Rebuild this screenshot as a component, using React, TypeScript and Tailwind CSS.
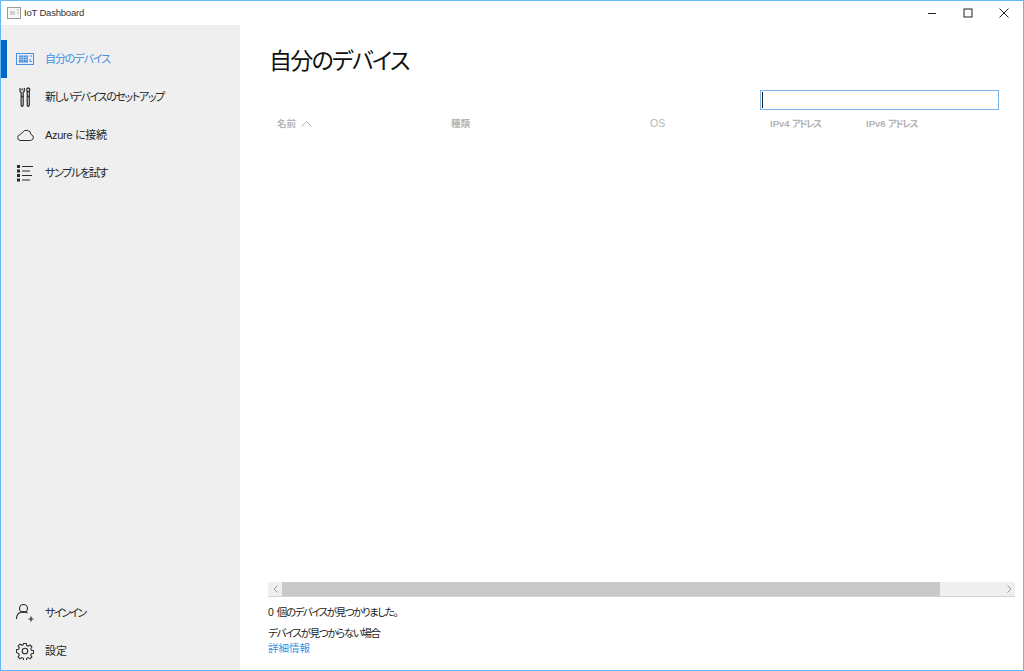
import React from "react";

function DeviceIcon() {
  return (
    <svg width="18" height="13" viewBox="0 0 18 13" fill="none" stroke="#4a90dc" strokeWidth="1">
      <rect x="0.5" y="0.5" width="17" height="11" fill="#e6eef7" />
      <rect x="3" y="2.5" width="9" height="7" fill="#3f86d6" stroke="none" />
      <path d="M3 4.5h9M3 6.5h9M5 2.5v7M7.5 2.5v7M10 2.5v7" stroke="#cfe0f2" strokeWidth="0.6" />
      <path d="M14 3h2M14 6v2.5h2" />
    </svg>
  );
}
function ToolsIcon() {
  return (
    <svg width="12" height="20" viewBox="0 0 14 20" preserveAspectRatio="none" fill="none" stroke="#2b2b2b" strokeWidth="1.4">
      <path d="M1.2 1v2.6a2 2 0 0 0 1.3 1.8V18a1.2 1.2 0 0 0 2.4 0V5.4a2 2 0 0 0 1.3-1.8V1" />
      <path d="M3.7 1.5v2" />
      <circle cx="10.8" cy="2.8" r="1.8" />
      <path d="M9.6 4.5V18a1.2 1.2 0 0 0 2.4 0V4.5" />
      <path d="M2.5 9.5h2.4M9.6 9.5H12" />
    </svg>
  );
}
function CloudIcon() {
  return (
    <svg width="18" height="12" viewBox="0 0 18 12" fill="none" stroke="#2b2b2b" strokeWidth="1">
      <path d="M4 11.5h10.5a3 3 0 0 0 .6-5.9A4.6 4.6 0 0 0 6.5 3.6 3 3 0 0 0 4.3 5.6 3 3 0 0 0 4 11.5z" />
    </svg>
  );
}
function ListIcon() {
  return (
    <svg width="16" height="17" viewBox="0 0 16 17" fill="none">
      <g fill="#2b2b2b">
        <rect x="0" y="0" width="3" height="3" />
        <rect x="0" y="4.5" width="3" height="3" />
        <rect x="0" y="9" width="3" height="3" />
        <rect x="0" y="13.5" width="3" height="3" />
      </g>
      <path d="M5 1.5h11M5 6h8M5 10.5h10M5 15h8" stroke="#2b2b2b" strokeWidth="1" />
    </svg>
  );
}
function UserPlusIcon() {
  return (
    <svg width="18" height="18" viewBox="0 0 18 18" fill="none" stroke="#2b2b2b" strokeWidth="1.1">
      <circle cx="7.5" cy="4.5" r="4" />
      <path d="M0.5 15a7 7 0 0 1 11-6" />
      <path d="M12.5 15h5M15 12.5v5" strokeWidth="1.2" />
    </svg>
  );
}
function GearIcon() {
  return (
    <svg width="18" height="18" viewBox="0 0 18 18" fill="none" stroke="#2b2b2b" strokeWidth="1.1">
      <circle cx="9" cy="9" r="2.8" />
      <path d="M7.6 1h2.8l.4 2.3 1.5.7 2-1.3 2 2-1.3 2 .7 1.5 2.3.4v2.8l-2.3.4-.7 1.5 1.3 2-2 2-2-1.3-1.5.7-.4 2.3H7.6l-.4-2.3-1.5-.7-2 1.3-2-2 1.3-2-.7-1.5L0 10.4V7.6l2.3-.4.7-1.5-1.3-2 2-2 2 1.3 1.5-.7z" transform="translate(0.45 0.45) scale(0.95)" />
    </svg>
  );
}
function AppIcon() {
  return (
    <svg width="14" height="12" viewBox="0 0 14 12" fill="#f7f7f7" stroke="#9a9a9a" strokeWidth="1">
      <rect x="0.5" y="0.5" width="13" height="11" />
      <path d="M3 4h5v4H3z" fill="#d0d0d0" stroke="none" />
      <path d="M10 3h2M10 6h2" stroke="#b0b0b0" />
    </svg>
  );
}

function NavItem({ icon, label, active, track }: { icon: React.ReactNode; label: string; active?: boolean; track?: string }) {
  return (
    <div className="relative flex h-[38px] items-center">
      {active && <div className="absolute left-0 top-0 h-[38px] w-[6px] bg-[#0067c8]" />}
      <div className="flex w-[44px] shrink-0 justify-center pl-[4px]">{icon}</div>
      <span className={`pt-[1px] text-[11px] ${track ?? ""} ${active ? "text-[#3f8fdf]" : "text-[#262626]"}`}>{label}</span>
    </div>
  );
}

function Th({ w, children }: { w: string; children: React.ReactNode }) {
  return <div className={`${w} shrink-0 text-[9.5px] font-bold text-[#b4b4b4]`}>{children}</div>;
}

export default function App() {
  return (
    <div
      className="flex h-[671px] w-[1024px] flex-col overflow-hidden border border-[#62b8f2] bg-white [font-feature-settings:'palt']"
      style={{ fontFamily: '"Liberation Sans","Noto Sans CJK JP",sans-serif' }}
    >
      <div className="flex h-[24px] shrink-0 items-center">
        <div className="ml-[6px] flex items-center gap-[3px]">
          <AppIcon />
          <span className="text-[9.5px] tracking-[-0.2px] text-[#333]">IoT Dashboard</span>
        </div>
        <div className="ml-auto flex items-center pr-[1px]">
          <div className="flex w-[36px] justify-center">
            <svg width="10" height="10" viewBox="0 0 10 10" stroke="#222" strokeWidth="1"><path d="M1 5.5h8" /></svg>
          </div>
          <div className="flex w-[36px] justify-center">
            <svg width="10" height="10" viewBox="0 0 10 10" fill="none" stroke="#222" strokeWidth="1"><rect x="1" y="1" width="8" height="8" /></svg>
          </div>
          <div className="flex w-[36px] justify-center">
            <svg width="10" height="10" viewBox="0 0 10 10" stroke="#222" strokeWidth="1"><path d="M0.5 0.5l9 9M9.5 0.5l-9 9" /></svg>
          </div>
        </div>
      </div>
      <div className="flex min-h-0 flex-1">
        <aside className="flex w-[239px] shrink-0 flex-col justify-between bg-[#efefef] pt-[15px]">
          <div className="flex flex-col">
            <NavItem active icon={<DeviceIcon />} label="自分のデバイス" track="tracking-[-1.1px]" />
            <NavItem icon={<ToolsIcon />} label="新しいデバイスのセットアップ" track="tracking-[-1.35px]" />
            <NavItem icon={<CloudIcon />} label="Azure に接続" track="tracking-[-0.3px]" />
            <NavItem icon={<ListIcon />} label="サンプルを試す" track="tracking-[-1.3px]" />
          </div>
          <div className="flex flex-col">
            <NavItem icon={<UserPlusIcon />} label="サインイン" track="tracking-[-1.8px]" />
            <NavItem icon={<GearIcon />} label="設定" />
          </div>
        </aside>
        <main className="flex min-w-0 flex-1 flex-col pl-[28px] pr-[8px]">
          <h1 className="mt-[18px] h-[35px] pl-[1px] text-[23px] font-normal leading-[36px] tracking-[-1.7px] text-[#111]">自分のデバイス</h1>
          <div className="mt-[12px] flex justify-end pr-[16px]">
            <div className="flex h-[20px] w-[239px] items-center border border-[#7ab6ec] pl-[1px]">
              <div className="h-[16px] w-[1px] bg-[#222]" />
            </div>
          </div>
          <div className="mt-[5px] flex h-[18px] items-center pl-[9px]">
            <Th w="w-[174px]">
              <span className="flex items-center gap-[5px]">
                名前
                <svg width="11" height="6" viewBox="0 0 11 6" fill="none" stroke="#b4b4b4" strokeWidth="1"><path d="M0.5 5.5l5-5 5 5" /></svg>
              </span>
            </Th>
            <Th w="w-[199px]">種類</Th>
            <Th w="w-[120px]"><span className="text-[10.5px] font-normal">OS</span></Th>
            <Th w="w-[96px]">IPv4 <span className="tracking-[-1.7px]">アドレス</span></Th>
            <Th w="w-[120px]">IPv6 <span className="tracking-[-1.5px]">アドレス</span></Th>
          </div>
          <div className="flex-1" />
          <div className="flex h-[15px] items-stretch border-b border-[#d4d4d4] bg-[#efefef]">
            <div className="flex w-[14px] items-center justify-center">
              <svg width="5" height="8" viewBox="0 0 5 8" fill="none" stroke="#9a9a9a" strokeWidth="1"><path d="M4.5 0.5L1 4l3.5 3.5" /></svg>
            </div>
            <div className="w-[658px] bg-[#c9c9c9]" />
            <div className="flex flex-1 items-center justify-end pr-[3px]">
              <svg width="5" height="8" viewBox="0 0 5 8" fill="none" stroke="#9a9a9a" strokeWidth="1"><path d="M0.5 0.5L4 4 0.5 7.5" /></svg>
            </div>
          </div>
          <div className="mt-[7px] h-[16px] text-[10.5px] leading-[16px] text-[#222]">0 <span className="tracking-[-1.45px]">個のデバイスが見つかりました。</span></div>
          <div className="mt-[6px] h-[15px] text-[10.5px] leading-[15px] tracking-[-1.35px] text-[#222]">デバイスが見つからない場合</div>
          <div className="mb-[14px] h-[15px] text-[10.5px] leading-[15px] text-[#3f8fdf]">詳細情報</div>
        </main>
      </div>
    </div>
  );
}
